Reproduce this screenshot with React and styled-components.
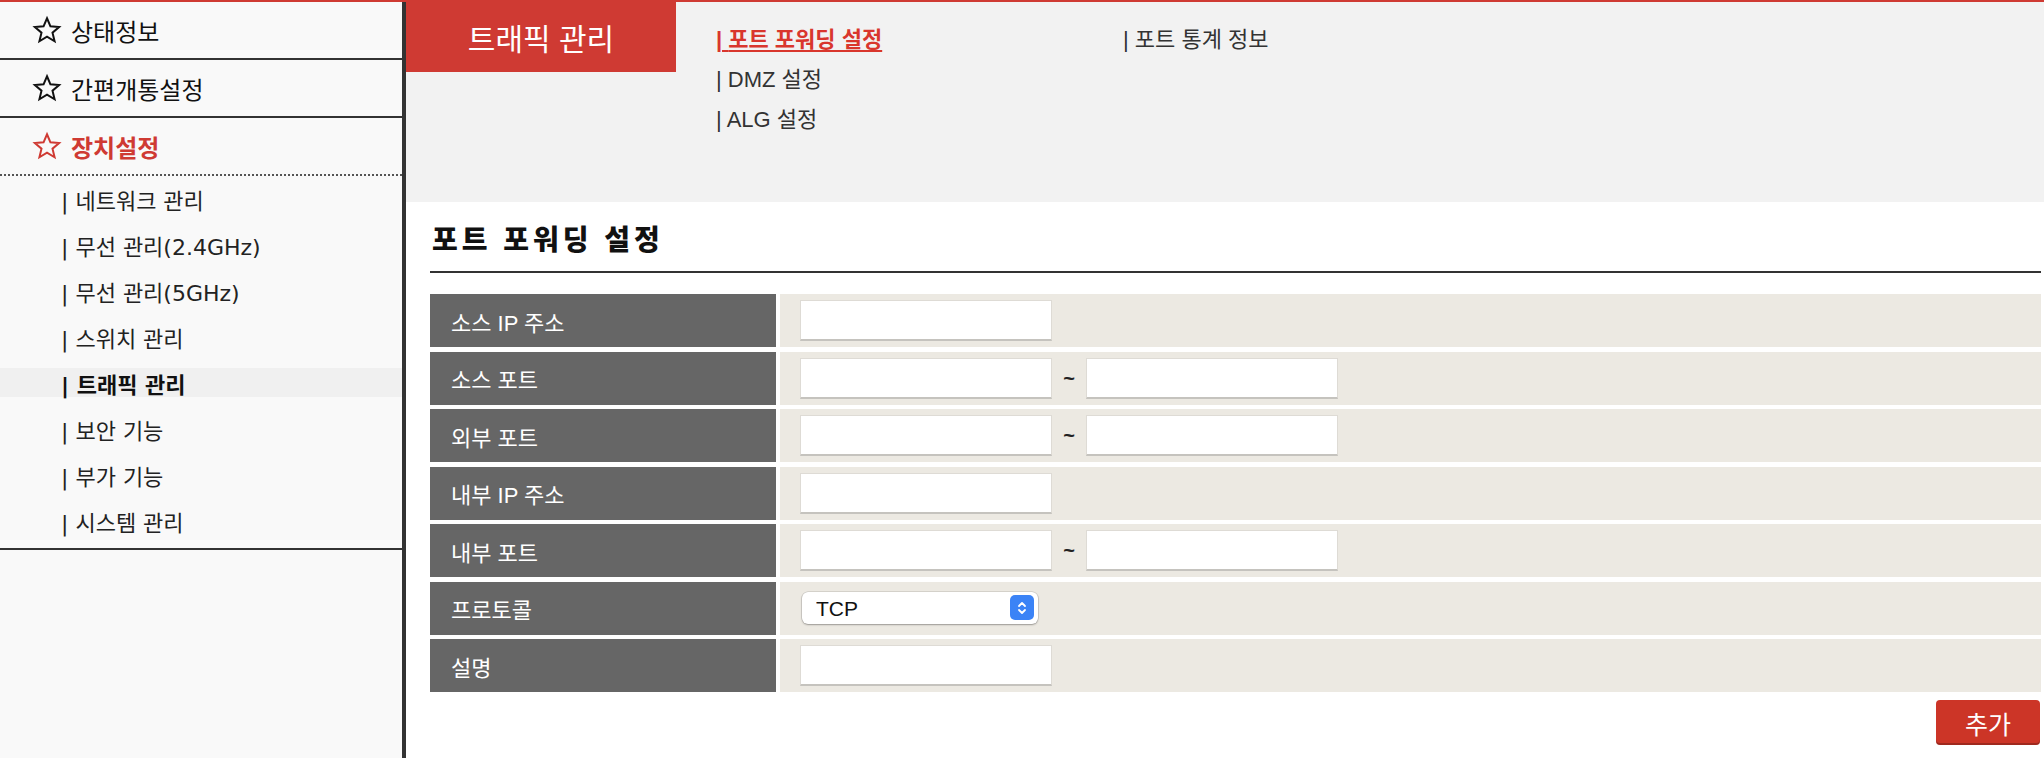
import React, { useState } from 'react';
import styled, { createGlobalStyle } from 'styled-components';

const RED = '#cf3a33';

const GlobalStyle = createGlobalStyle`
    body {
        margin: 0;
        font-family: "Liberation Sans", "Noto Sans CJK KR", sans-serif;
        background: #fff;
    }
    * { box-sizing: border-box; }
`;

const Page = styled.div`
    display: flex;
    min-height: 758px;
    border-top: 2px solid ${RED};
`;

const Sidebar = styled.nav`
    width: 406px;
    flex-shrink: 0;
    background: #f9f9f9;
    border-right: 4px solid #333;
`;

const MainItem = styled.div`
    display: flex;
    align-items: center;
    gap: 8px;
    height: 58px;
    padding-left: 31px;
    border-bottom: 2px ${p => (p.$dotted ? 'dotted #555' : 'solid #333')};
    font-size: 24px;
    color: ${p => (p.$active ? RED : '#111')};
    font-weight: ${p => (p.$active ? 700 : 400)};
`;

const SubList = styled.div`
    display: flex;
    flex-direction: column;
    gap: 17px;
    padding: 8px 0 13px;
    border-bottom: 2px solid #333;
`;

const SubItem = styled.div`
    display: flex;
    align-items: center;
    height: 29px;
    padding-left: 61px;
    font-family: "DejaVu Sans", "Noto Sans CJK KR", sans-serif;
    font-size: 22px;
    color: ${p => (p.$active ? '#111' : '#222')};
    font-weight: ${p => (p.$active ? 700 : 400)};
    background: ${p => (p.$active ? '#f0f0f0' : 'transparent')};
`;

const Main = styled.main`
    flex: 1;
    display: flex;
    flex-direction: column;
`;

const TopBar = styled.div`
    display: flex;
    align-items: flex-start;
    height: 200px;
    background: #f2f2f2;
`;

const Tab = styled.div`
    display: flex;
    align-items: center;
    justify-content: center;
    width: 270px;
    height: 70px;
    background: ${RED};
    color: #fff;
    font-size: 30px;
`;

const SubMenu = styled.div`
    display: grid;
    grid-template-columns: 407px 407px;
    grid-template-rows: repeat(3, 40px);
    grid-auto-flow: column;
    margin-left: 40px;
    padding-top: 18px;
`;

const SubLink = styled.a`
    font-size: 22px;
    line-height: 40px;
    color: ${p => (p.$active ? '#d9362d' : '#333')};
    font-weight: ${p => (p.$active ? 600 : 400)};
    text-decoration: ${p => (p.$active ? 'underline' : 'none')};
    text-decoration-thickness: 2px;
    text-underline-offset: 3px;
    cursor: pointer;
`;

const Content = styled.section`
    padding: 0 3px 0 24px;
`;

const Title = styled.h2`
    margin: 0;
    padding: 22px 0 13px 2px;
    line-height: 34px;
    font-size: 28px;
    font-weight: 900;
    letter-spacing: 4px;
    color: #111;
    border-bottom: 2px solid #333;
`;

const FormGrid = styled.div`
    display: grid;
    grid-template-columns: 346px 1fr;
    grid-auto-rows: 53px;
    column-gap: 4px;
    row-gap: 4.5px;
    margin-top: 21px;
`;

const Label = styled.div`
    display: flex;
    align-items: center;
    padding-left: 21px;
    background: #666;
    color: #fff;
    font-size: 22px;
`;

const Value = styled.div`
    display: flex;
    align-items: center;
    padding-left: 20px;
    background: #ece9e2;
`;

const Input = styled.input`
    width: 252px;
    height: 41px;
    border: 1px solid #dedbd5;
    border-bottom: 2px solid #c5c3be;
    background: #fff;
    font-size: 18px;
    padding: 0 8px;
    outline: none;
`;

const Tilde = styled.span`
    width: 34px;
    text-align: center;
    font-size: 20px;
    font-weight: 700;
    color: #222;
`;

const SelectWrap = styled.div`
    position: relative;
    width: 236px;
    height: 32px;
    margin-left: 2px;
`;

const Select = styled.select`
    appearance: none;
    width: 100%;
    height: 100%;
    padding: 0 0 0 14px;
    border: none;
    border-radius: 6px;
    background: #fff;
    box-shadow: 0 0 0 0.5px rgba(0, 0, 0, 0.18), 0 1px 2px rgba(0, 0, 0, 0.28);
    font-family: "Liberation Sans", sans-serif;
    font-size: 21px;
    color: #111;
    outline: none;
`;

const Stepper = styled.span`
    position: absolute;
    right: 4px;
    top: 3px;
    width: 24px;
    height: 25px;
    border-radius: 5px;
    background: #3b83f6;
    display: flex;
    align-items: center;
    justify-content: center;
    pointer-events: none;
`;

const ButtonRow = styled.div`
    display: flex;
    justify-content: flex-end;
    margin-top: 8px;
    padding-right: 1px;
`;

const AddButton = styled.button`
    width: 104px;
    height: 45px;
    border: none;
    border-radius: 4px;
    background: #cc3527;
    box-shadow: inset 0 -2px 0 rgba(0, 0, 0, 0.22);
    color: #fff;
    font-family: "Liberation Sans", "Noto Sans CJK KR", sans-serif;
    font-size: 25px;
    cursor: pointer;
`;

const Star = ({ color }) => (
    <svg width="32" height="30" viewBox="0 0 24 24" fill="none">
        <path
            d="M12 2.6l2.75 6.45 6.95.55-5.3 4.55 1.65 6.85L12 17.35 5.95 21l1.65-6.85-5.3-4.55 6.95-.55z"
            stroke={color}
            strokeWidth="1.6"
            strokeLinejoin="miter"
        />
    </svg>
);

const mainMenu = [
    { label: '상태정보' },
    { label: '간편개통설정' },
    { label: '장치설정', active: true, dotted: true },
];

const subMenu = [
    '네트워크 관리',
    '무선 관리(2.4GHz)',
    '무선 관리(5GHz)',
    '스위치 관리',
    '트래픽 관리',
    '보안 기능',
    '부가 기능',
    '시스템 관리',
];

const trafficLinks = ['포트 포워딩 설정', 'DMZ 설정', 'ALG 설정', '포트 통계 정보'];

const fields = [
    { label: '소스 IP 주소', type: 'single' },
    { label: '소스 포트', type: 'range' },
    { label: '외부 포트', type: 'range' },
    { label: '내부 IP 주소', type: 'single' },
    { label: '내부 포트', type: 'range' },
    { label: '프로토콜', type: 'select' },
    { label: '설명', type: 'single' },
];

function App() {
    const [protocol, setProtocol] = useState('TCP');

    return (
        <Page>
            <GlobalStyle />
            <Sidebar>
                {mainMenu.map(m => (
                    <MainItem key={m.label} $active={m.active} $dotted={m.dotted}>
                        <Star color={m.active ? RED : '#111'} />
                        {m.label}
                    </MainItem>
                ))}
                <SubList>
                    {subMenu.map(s => (
                        <SubItem key={s} $active={s === '트래픽 관리'}>| {s}</SubItem>
                    ))}
                </SubList>
            </Sidebar>

            <Main>
                <TopBar>
                    <Tab>트래픽 관리</Tab>
                    <SubMenu>
                        {trafficLinks.map((l, i) => (
                            <SubLink key={l} $active={i === 0}>| {l}</SubLink>
                        ))}
                    </SubMenu>
                </TopBar>

                <Content>
                    <Title>포트 포워딩 설정</Title>
                    <FormGrid>
                        {fields.map(f => (
                            <React.Fragment key={f.label}>
                                <Label>{f.label}</Label>
                                <Value>
                                    {f.type === 'select' ? (
                                        <SelectWrap>
                                            <Select value={protocol} onChange={e => setProtocol(e.target.value)}>
                                                <option>TCP</option>
                                                <option>UDP</option>
                                                <option>TCP/UDP</option>
                                            </Select>
                                            <Stepper>
                                                <svg width="10" height="16" viewBox="0 0 10 16" fill="none">
                                                    <path d="M2 6l3-3 3 3M2 10l3 3 3-3" stroke="#fff" strokeWidth="1.8" strokeLinecap="round" strokeLinejoin="round" />
                                                </svg>
                                            </Stepper>
                                        </SelectWrap>
                                    ) : (
                                        <>
                                            <Input type="text" />
                                            {f.type === 'range' && (
                                                <>
                                                    <Tilde>~</Tilde>
                                                    <Input type="text" />
                                                </>
                                            )}
                                        </>
                                    )}
                                </Value>
                            </React.Fragment>
                        ))}
                    </FormGrid>
                    <ButtonRow>
                        <AddButton type="button">추가</AddButton>
                    </ButtonRow>
                </Content>
            </Main>
        </Page>
    );
}

export default App;
